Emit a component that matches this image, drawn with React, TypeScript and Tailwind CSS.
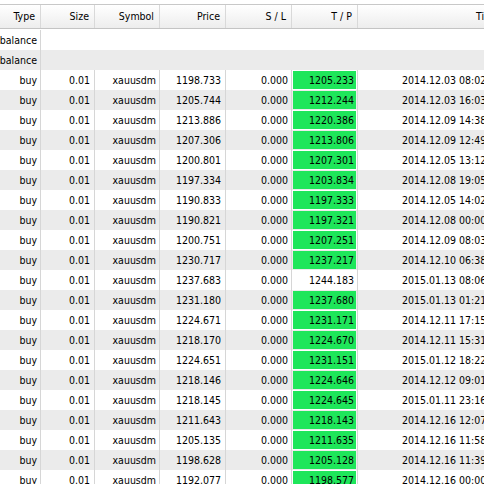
import React from "react";

type Row = { price: string; tp: string; time: string; green: boolean };

const rows: Row[] = [
  { price: "1198.733", tp: "1205.233", time: "2014.12.03 08:02", green: true },
  { price: "1205.744", tp: "1212.244", time: "2014.12.03 16:03", green: true },
  { price: "1213.886", tp: "1220.386", time: "2014.12.09 14:38", green: true },
  { price: "1207.306", tp: "1213.806", time: "2014.12.09 12:49", green: true },
  { price: "1200.801", tp: "1207.301", time: "2014.12.05 13:12", green: true },
  { price: "1197.334", tp: "1203.834", time: "2014.12.08 19:05", green: true },
  { price: "1190.833", tp: "1197.333", time: "2014.12.05 14:02", green: true },
  { price: "1190.821", tp: "1197.321", time: "2014.12.08 00:00", green: true },
  { price: "1200.751", tp: "1207.251", time: "2014.12.09 08:03", green: true },
  { price: "1230.717", tp: "1237.217", time: "2014.12.10 06:38", green: true },
  { price: "1237.683", tp: "1244.183", time: "2015.01.13 08:06", green: false },
  { price: "1231.180", tp: "1237.680", time: "2015.01.13 01:21", green: true },
  { price: "1224.671", tp: "1231.171", time: "2014.12.11 17:15", green: true },
  { price: "1218.170", tp: "1224.670", time: "2014.12.11 15:31", green: true },
  { price: "1224.651", tp: "1231.151", time: "2015.01.12 18:22", green: true },
  { price: "1218.146", tp: "1224.646", time: "2014.12.12 09:01", green: true },
  { price: "1218.145", tp: "1224.645", time: "2015.01.11 23:16", green: true },
  { price: "1211.643", tp: "1218.143", time: "2014.12.16 12:07", green: true },
  { price: "1205.135", tp: "1211.635", time: "2014.12.16 11:58", green: true },
  { price: "1198.628", tp: "1205.128", time: "2014.12.16 11:39", green: true },
  { price: "1192.077", tp: "1198.577", time: "2014.12.16 00:00", green: true },
];

function HeadCell({ w, children }: { w: string; children: React.ReactNode }) {
  return (
    <div className={`${w} shrink-0 flex items-center justify-end pr-[5px] border-r border-[#d9d9d9] overflow-hidden whitespace-nowrap`}>
      {children}
    </div>
  );
}

export default function App() {
  return (
    <div className="w-[484px] h-[484px] overflow-hidden bg-white text-[10.5px] text-black font-['DejaVu_Sans_Condensed','DejaVu_Sans',sans-serif] font-stretch-condensed leading-none">
      <div className="h-[4px] bg-white" />
      {/* header */}
      <div className="h-[25px] flex border-t border-[#c8c8c8] border-b border-b-[#c4c4c4] bg-gradient-to-b from-white to-[#ededed]">
        <HeadCell w="w-[41px]">Type</HeadCell>
        <HeadCell w="w-[54px]">Size</HeadCell>
        <HeadCell w="w-[65px]">Symbol</HeadCell>
        <HeadCell w="w-[66px]">Price</HeadCell>
        <HeadCell w="w-[66px]">S / L</HeadCell>
        <HeadCell w="w-[66px]">T / P</HeadCell>
        <div className="flex-1 flex items-center pl-[118px] whitespace-nowrap overflow-hidden">Time</div>
      </div>
      <div className="h-[1px] bg-white" />
      {/* balance rows */}
      <div className="h-[20px] flex bg-white">
        <div className="w-[41px] shrink-0 flex items-center justify-end pr-[3px] border-r border-[#d6d6d6] whitespace-nowrap">balance</div>
        <div className="flex-1" />
      </div>
      <div className="h-[20px] flex bg-[#ebebeb]">
        <div className="w-[41px] shrink-0 flex items-center justify-end pr-[3px] border-r border-[#d6d6d6] whitespace-nowrap">balance</div>
        <div className="flex-1" />
      </div>
      {rows.map((r, i) => (
        <div key={i} className={`h-[20px] flex ${i % 2 === 0 ? "bg-white" : "bg-[#ebebeb]"}`}>
          <div className="w-[41px] shrink-0 flex items-center justify-end pr-[3px] border-r border-[#d6d6d6]">buy</div>
          <div className="w-[54px] shrink-0 flex items-center justify-end pr-[4px] border-r border-[#d6d6d6]">0.01</div>
          <div className="w-[65px] shrink-0 flex items-center justify-end pr-[3px] border-r border-[#d6d6d6]">xauusdm</div>
          <div className="w-[66px] shrink-0 flex items-center justify-end pr-[4px] border-r border-[#d6d6d6]">{r.price}</div>
          <div className="w-[66px] shrink-0 flex items-center justify-end pr-[3px] border-r border-[#d6d6d6]">0.000</div>
          <div className="w-[66px] shrink-0 flex border-r border-[#d6d6d6] p-[1px]">
            <div className={`flex-1 flex items-center justify-end pr-[2px] ${r.green ? "bg-[#1ee65a]" : ""}`}>{r.tp}</div>
          </div>
          <div className="flex-1 flex items-center pl-[44px] whitespace-nowrap overflow-hidden">{r.time}</div>
        </div>
      ))}
    </div>
  );
}
